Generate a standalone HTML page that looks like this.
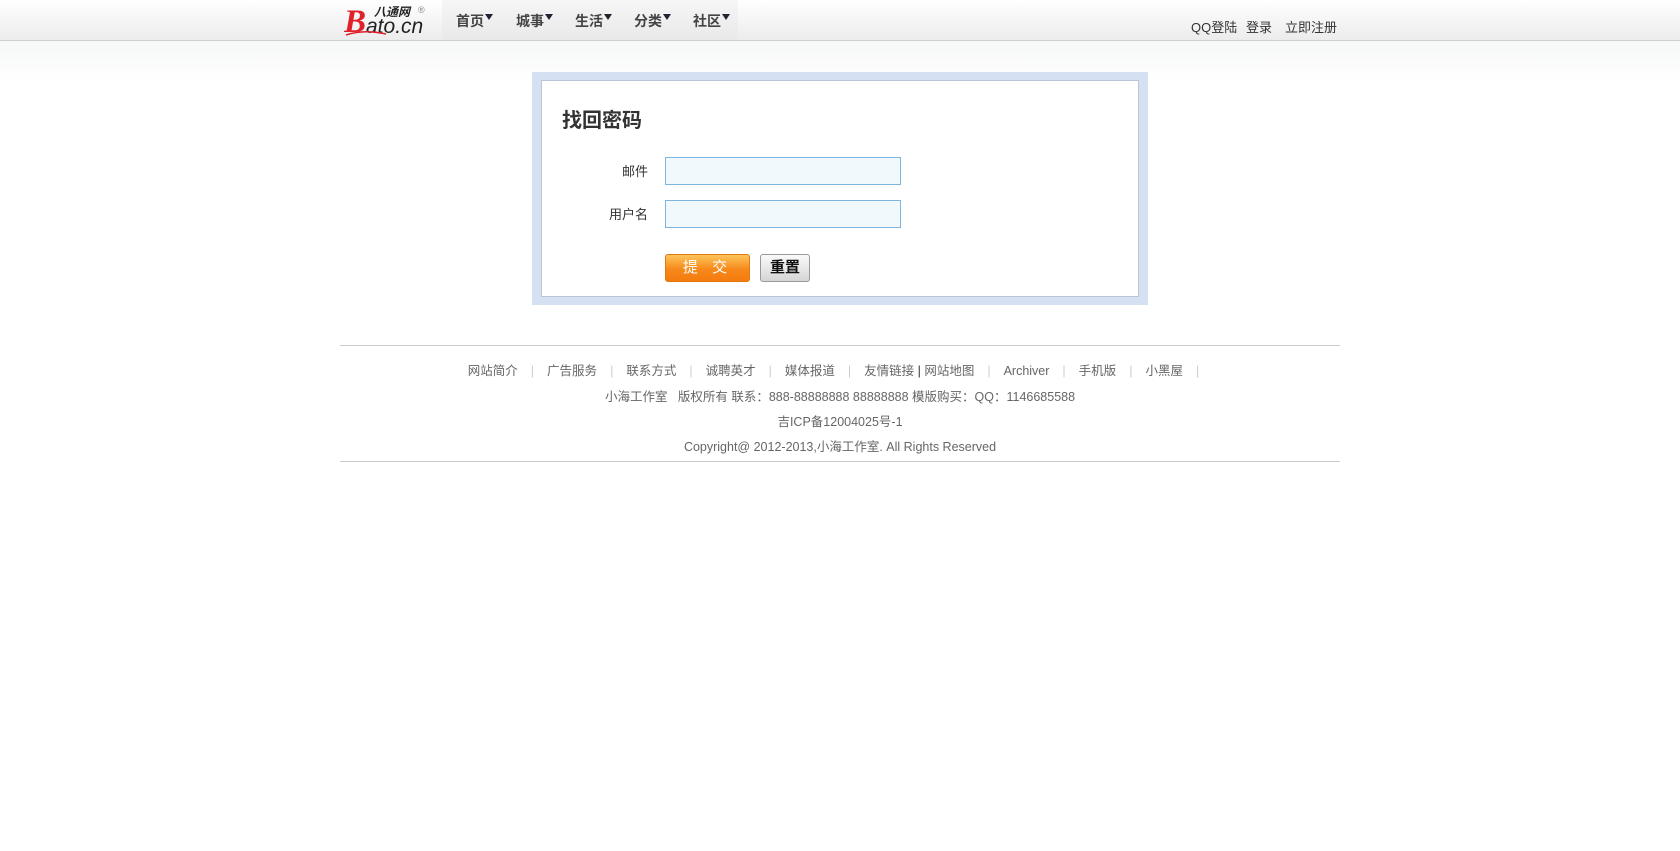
<!DOCTYPE html>
<html><head><meta charset="utf-8"><style>
*{margin:0;padding:0;box-sizing:border-box}
body{width:1680px;height:851px;background:#fff;font-family:"Liberation Sans","Noto Sans CJK SC",sans-serif;font-size:13px;color:#333;position:relative;overflow:hidden}
.hd{position:absolute;left:0;top:0;width:1680px;height:41px;background:linear-gradient(#fff,#ececec);border-bottom:1px solid #cfcfcf}
.hd2{position:absolute;left:0;top:41px;width:1680px;height:40px;background:linear-gradient(#f6f7f8,#fff)}
.logo{position:absolute;left:344px;top:3px;width:88px;height:34px}
.nav{position:absolute;left:442px;top:0;width:296px;height:40px;background:linear-gradient(#f6f6f6,#e9e9e9)}
.nav span{position:absolute;top:11px;font-size:14px;font-weight:bold;color:#444}
.nav span i{display:inline-block;width:0;height:0;border-left:4px solid transparent;border-right:4px solid transparent;border-top:6px solid #223;vertical-align:top;margin-top:3px;margin-left:1px}
.rl{position:absolute;top:17px;font-size:13px;color:#333}
.box{position:absolute;left:532px;top:72px;width:616px;height:233px;background:#d6e0f3;padding:8px 9px 8px 9px}
.in{width:100%;height:100%;background:#fff;border:1px solid #b9c4d6;position:relative}
.t{position:absolute;left:20px;top:23px;font-size:20px;font-weight:bold;color:#333}
.lb{position:absolute;right:490px;font-size:13px;color:#333}
.ip{position:absolute;left:123px;width:236px;height:28px;background:#f2f9fd;border:1px solid #7db6e0}
.b1{position:absolute;left:123px;top:173px;width:85px;height:28px;border:1px solid #e07a10;border-radius:3px;background:linear-gradient(#fdc55b,#f7891b 55%,#f57b0f);color:#fff;font-size:15px;text-align:center;line-height:26px;letter-spacing:5px}
.b2{position:absolute;left:218px;top:173px;width:50px;height:28px;border:1px solid #999;border-radius:3px;background:linear-gradient(#fafafa,#e8e8e8 50%,#d5d5d5);color:#111;font-size:15px;text-align:center;line-height:26px;font-weight:bold}
.ln{position:absolute;left:340px;width:1000px;border-top:1px solid #ccc}
.ft{position:absolute;left:340px;width:1000px;text-align:center;font-size:12.5px;color:#666}
.ft b{font-weight:normal;color:#ccc;margin:0 13px}
</style></head><body>
<div class="hd"></div><div class="hd2"></div>
<svg class="logo" viewBox="0 0 88 34"><text x="0" y="29" font-family="Liberation Serif" font-style="italic" font-weight="bold" font-size="33" fill="#e0202a">B</text><text x="22" y="30" font-family="Liberation Sans" font-style="italic" font-size="21" fill="#222">ato.cn</text><text x="30" y="13" font-size="12" font-weight="bold" font-style="italic" fill="#222" font-family="Noto Sans CJK SC">八通网</text><text x="74" y="10" font-size="9" fill="#888">®</text><path d="M2 32 Q20 26 42 31" stroke="#e0202a" stroke-width="1.5" fill="none"/></svg>
<div class="nav"><span style="left:14px">首页<i></i></span><span style="left:74px">城事<i></i></span><span style="left:133px">生活<i></i></span><span style="left:192px">分类<i></i></span><span style="left:251px">社区<i></i></span></div>
<div class="rl" style="left:1191px">QQ登陆</div><div class="rl" style="left:1246px">登录</div><div class="rl" style="left:1285px">立即注册</div>
<div class="box"><div class="in">
<div class="t">找回密码</div>
<div class="lb" style="top:80px">邮件</div><div class="ip" style="top:76px"></div>
<div class="lb" style="top:123px">用户名</div><div class="ip" style="top:119px"></div>
<div class="b1">提 交</div><div class="b2">重置</div>
</div></div>
<div class="ln" style="top:345px"></div>
<div class="ft" style="top:360px">网站简介<b>|</b>广告服务<b>|</b>联系方式<b>|</b>诚聘英才<b>|</b>媒体报道<b>|</b>友情链接 <span style="color:#333">|</span> 网站地图<b>|</b>Archiver<b>|</b>手机版<b>|</b>小黑屋<b>|</b></div>
<div class="ft" style="top:386px">小海工作室&nbsp;&nbsp;&nbsp;版权所有 联系：888-88888888 88888888 模版购买：QQ：1146685588</div>
<div class="ft" style="top:411px">吉ICP备12004025号-1</div>
<div class="ft" style="top:436px">Copyright@ 2012-2013,小海工作室. All Rights Reserved</div>
<div class="ln" style="top:461px"></div>
</body></html>
